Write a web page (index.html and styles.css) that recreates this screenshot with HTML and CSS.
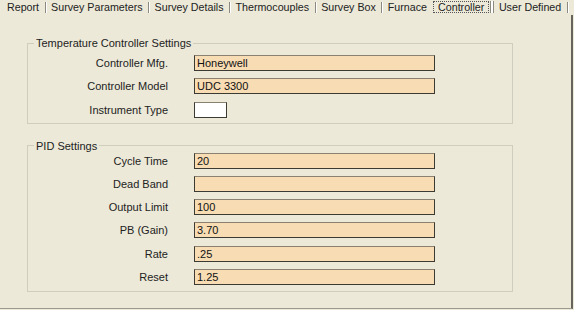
FILE: index.html
```html
<!DOCTYPE html>
<html lang="en">
<head>
  <meta charset="UTF-8" />
  <title>Controller</title>
  <link rel="stylesheet" href="styles.css">
</head>
<body>
  <div class="window">
    <div class="tabs">
      <span class="tab first">Report</span>
      <span class="tab">Survey Parameters</span>
      <span class="tab">Survey Details</span>
      <span class="tab">Thermocouples</span>
      <span class="tab">Survey Box</span>
      <span class="tab before-active">Furnace</span>
      <span class="tab active"><span class="focus">Controller</span></span>
      <span class="tab">User Defined</span>
    </div>

    <div class="page">
      <fieldset class="group temp">
        <legend>Temperature Controller Settings</legend>
        <div class="rows">
          <div class="row">
            <label>Controller Mfg.</label>
            <input class="field" type="text" value="Honeywell">
          </div>
          <div class="row">
            <label>Controller Model</label>
            <input class="field" type="text" value="UDC 3300">
          </div>
          <div class="row">
            <label>Instrument Type</label>
            <input class="field short" type="text" value="">
          </div>
        </div>
      </fieldset>

      <fieldset class="group pid">
        <legend>PID Settings</legend>
        <div class="rows">
          <div class="row">
            <label>Cycle Time</label>
            <input class="field" type="text" value="20">
          </div>
          <div class="row">
            <label>Dead Band</label>
            <input class="field" type="text" value="">
          </div>
          <div class="row">
            <label>Output Limit</label>
            <input class="field" type="text" value="100">
          </div>
          <div class="row">
            <label>PB (Gain)</label>
            <input class="field" type="text" value="3.70">
          </div>
          <div class="row">
            <label>Rate</label>
            <input class="field" type="text" value=".25">
          </div>
          <div class="row">
            <label>Reset</label>
            <input class="field" type="text" value="1.25">
          </div>
        </div>
      </fieldset>
    </div>
  </div>
</body>
</html>
```

FILE: styles.css
```css
body {
  margin: 0;
  background-color: #ece9d8;
  font-family: "Liberation Sans", Arial, sans-serif;
  font-size: 11px;
  color: #222;
}
.window {
  height: 309px;
  display: flex;
  flex-direction: column;
}
/* tab strip, separated by etched bars */
.tabs {
  display: flex;
  align-items: flex-start;
  height: 15px;
  padding-left: 1px;
  font-size: 10.7px;
}
.tab {
  margin-top: 2px;
  height: 11px;
  line-height: 11px;
  padding: 0 5.5px;
  border-right: 1px solid #8c8a80;
  box-shadow: 1px 0 0 #fff;
  white-space: nowrap;
}
.tab.first {
  padding-left: 6px;
}
.tab.before-active {
  border-right: none;
  box-shadow: none;
  padding-right: 6px;
}
.tab.active {
  margin-top: 1px;
  height: 12px;
  padding: 0 1px 0 0;
  border-right: 1px solid #8c8a80;
  box-shadow: 2px 0 0 #fff, 3px 0 0 #8c8a80;
  margin-right: 2px;
}
.focus {
  display: block;
  border: 1px dotted #555;
  padding: 0 4px;
  line-height: 10px;
}
.page {
  flex: 1;
  margin-right: 1px;
  border-right: 2px solid #67655b;
  border-bottom: 1px solid #9d9b8f;
  padding: 22px 0 0 27px;
}
/* group boxes */
.group {
  width: 486px;
  box-sizing: border-box;
  margin: 0;
  padding: 0;
  border: 1px solid #cfcdbd;
}
.group legend {
  margin-left: 6px;
  padding: 0 2px;
  line-height: 12px;
}
.group.temp {
  padding: 6px 0 5px;
}
.group.pid {
  margin-top: 16px;
  padding: 1px 0 6px;
}
.rows {
  display: flex;
  flex-direction: column;
  gap: 7.25px;
}
.row {
  display: grid;
  grid-template-columns: 140px 241px;
  column-gap: 26px;
  align-items: center;
}
.row label {
  text-align: right;
}
.field {
  box-sizing: border-box;
  width: 241px;
  height: 16px;
  margin: 0;
  padding: 0 2px;
  font: inherit;
  color: #111;
  background-color: #f7dcb4;
  border: 1px solid #3b3a33;
  border-top-color: #8a8170;
  outline: none;
}
.field.short {
  width: 33px;
  background-color: #fff;
}
```
